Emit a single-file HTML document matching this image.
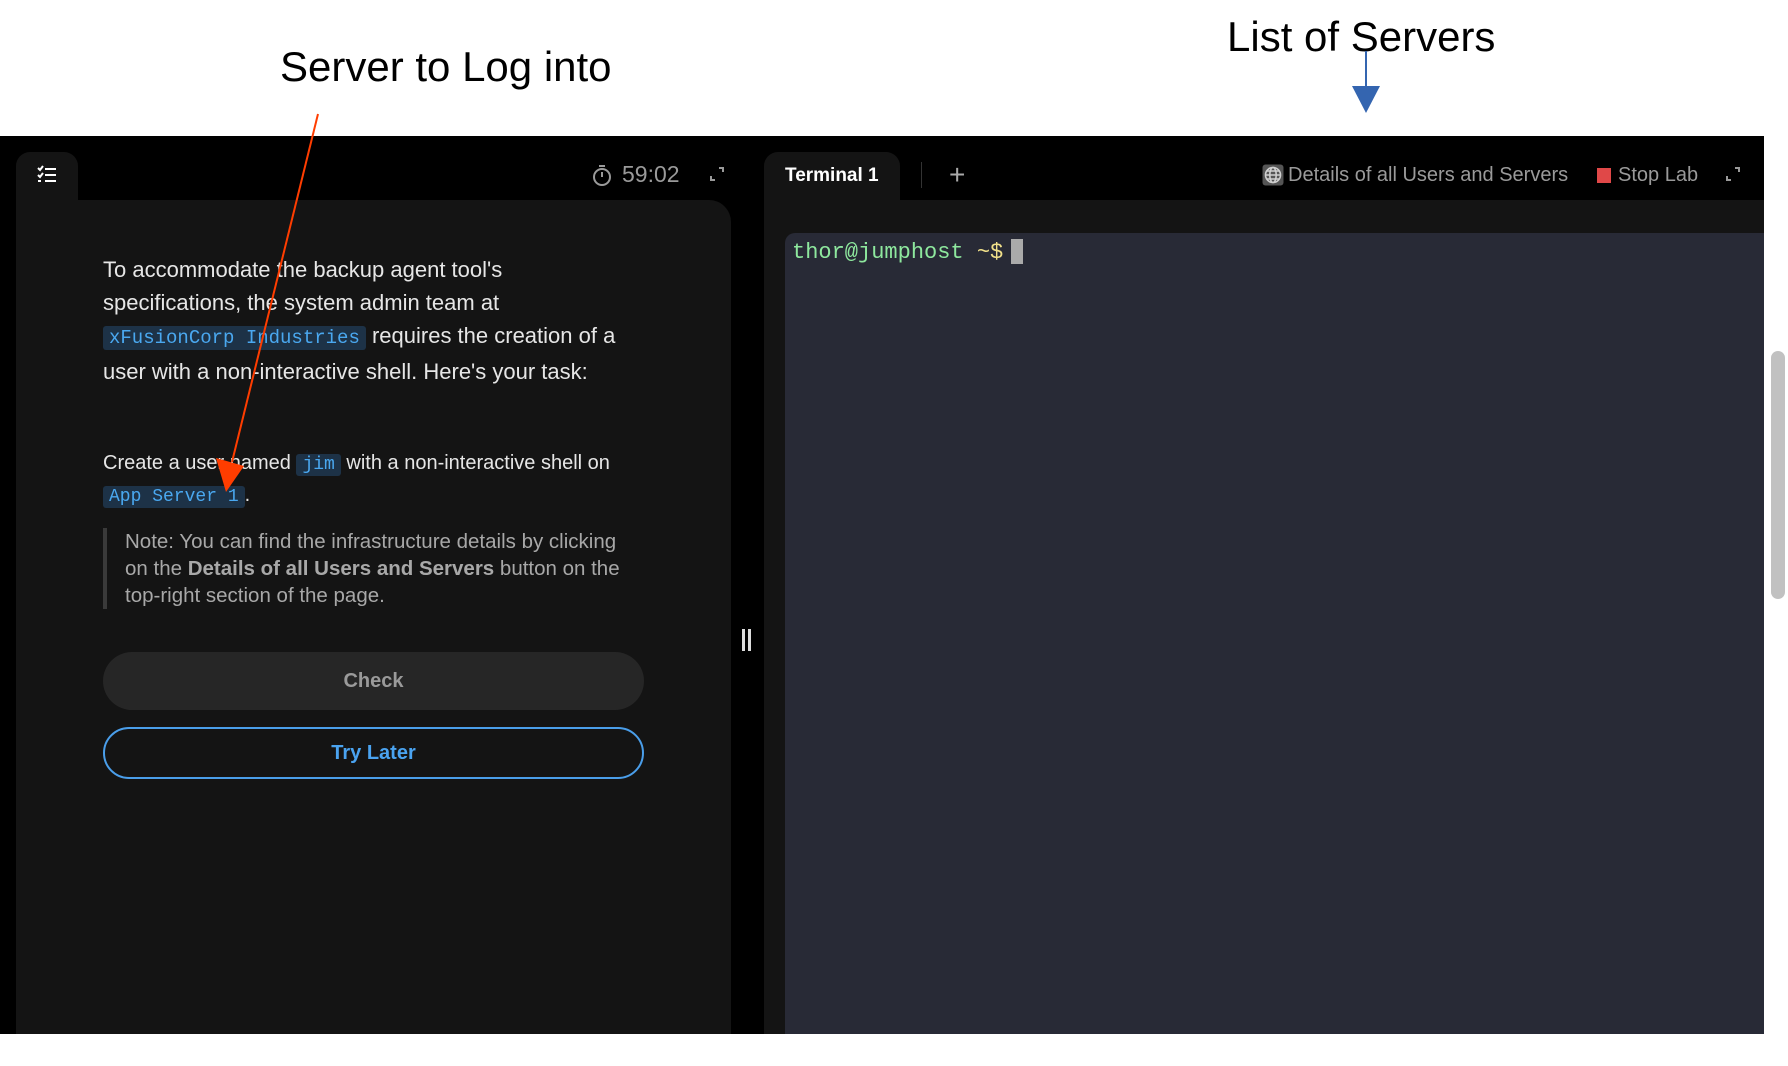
<!DOCTYPE html>
<html><head><meta charset="utf-8"><style>
*{margin:0;padding:0;box-sizing:border-box}
body{width:1788px;height:1066px;background:#fff;position:relative;overflow:hidden;font-family:"Liberation Sans",sans-serif}
.a{position:absolute}
.dark{left:0;top:136px;width:1764px;height:898px;background:#000}
.lp{left:16px;top:200px;width:715px;height:834px;background:#141414;border-top-right-radius:22px}
.ltab{left:16px;top:152px;width:62px;height:60px;background:#141414;border-radius:14px 14px 0 0}
.rtab{left:764px;top:152px;width:136px;height:60px;background:#141414;border-radius:14px 14px 0 0;color:#fff;font-weight:bold;font-size:19px;padding-left:21px;line-height:48px}
.rp{left:764px;top:200px;width:1000px;height:834px;background:#141414}
.term{left:785px;top:233px;width:979px;height:801px;background:#282a36;border-top-left-radius:10px}
.txt{color:#e6e6e6;font-size:22px;line-height:33px;white-space:nowrap}
code{font-family:"Liberation Mono",monospace;color:#4aa8f0;background:#1d3247;padding:1px 6px;border-radius:3px;font-size:19px}
.hdr{color:#9a9a9a;font-size:20px}
</style></head><body>
<div class="a" style="left:280px;top:43px;font-size:42px;color:#000">Server to Log into</div>
<div class="a" style="left:1227px;top:13px;font-size:42px;color:#000">List of Servers</div>
<div class="a dark"></div>
<div class="a ltab"></div>
<div class="a lp"></div>
<svg class="a" style="left:36px;top:164px" width="22" height="22" viewBox="0 0 22 22" fill="none" stroke="#fff" stroke-width="2"><path d="M2 4l2 2 3-4M2 11l2 2 3-4M9 5h11M9 11h11M9 17h11M2 17h3"/></svg>
<svg class="a" style="left:591px;top:163px" width="22" height="24" viewBox="0 0 22 24" fill="none" stroke="#9a9a9a" stroke-width="2"><circle cx="11" cy="14" r="8"/><path d="M8 3h6M11 14V9"/></svg>
<div class="a hdr" style="left:622px;top:161px;font-size:23px">59:02</div>
<svg class="a" style="left:709px;top:166px" width="16" height="16" viewBox="0 0 16 16" fill="none" stroke="#9a9a9a" stroke-width="2"><path d="M10 2h4v4M2 10v4h4"/></svg>
<div class="a txt" style="left:103px;top:253px">To accommodate the backup agent tool's<br>specifications, the system admin team at<br><code>xFusionCorp Industries</code> requires the creation of a<br>user with a non-interactive shell. Here's your task:</div>
<div class="a txt" style="left:103px;top:448px;font-size:20px;line-height:30px">Create a user named <code style="font-size:18px">jim</code> with a non-interactive shell on<br><code style="font-size:18px">App Server 1</code>.</div>
<div class="a" style="left:103px;top:528px;width:4px;height:81px;background:#3a3a3a"></div>
<div class="a" style="left:125px;top:528px;color:#a8a8a8;font-size:20.5px;line-height:27px;white-space:nowrap">Note: You can find the infrastructure details by clicking<br>on the <b>Details of all Users and Servers</b> button on the<br>top-right section of the page.</div>
<div class="a" style="left:103px;top:652px;width:541px;height:58px;background:#262626;border-radius:29px;color:#9a9a9a;font-weight:bold;font-size:20px;text-align:center;line-height:58px">Check</div>
<div class="a" style="left:103px;top:727px;width:541px;height:52px;border:2px solid #4a9eea;border-radius:26px;color:#4aa3f0;font-weight:bold;font-size:20px;text-align:center;line-height:48px">Try Later</div>
<div class="a" style="left:742px;top:629px;width:3px;height:22px;background:#ddd"></div>
<div class="a" style="left:748px;top:629px;width:3px;height:22px;background:#ddd"></div>
<div class="a rp"></div>
<div class="a rtab">Terminal 1</div>
<div class="a" style="left:921px;top:162px;width:1px;height:26px;background:#333"></div>
<div class="a" style="left:949px;top:160px;color:#aaa;font-size:28px;line-height:30px">+</div>
<svg class="a" style="left:1262px;top:164px" width="22" height="22" viewBox="0 0 22 22" fill="none" stroke="#cfcfcf" stroke-width="1.6"><rect x="0.5" y="0.5" width="21" height="21" rx="3" fill="#555" stroke="none"/><circle cx="11" cy="11" r="7.5"/><ellipse cx="11" cy="11" rx="3.2" ry="7.5"/><path d="M3.5 11h15M5 7h12M5 15h12"/></svg>
<div class="a hdr" style="left:1288px;top:164px">Details of all Users and Servers</div>
<div class="a" style="left:1597px;top:168px;width:14px;height:15px;background:#e04848"></div>
<div class="a hdr" style="left:1618px;top:164px">Stop Lab</div>
<svg class="a" style="left:1725px;top:166px" width="16" height="16" viewBox="0 0 16 16" fill="none" stroke="#9a9a9a" stroke-width="2"><path d="M10 2h4v4M2 10v4h4"/></svg>
<div class="a term"></div>
<div class="a" style="left:792px;top:240px;font-family:'Liberation Mono',monospace;font-size:22px;color:#8ee89e">thor@jumphost <span style="color:#f1e08a">~$</span></div>
<div class="a" style="left:1011px;top:239px;width:12px;height:25px;background:#aaa"></div>
<div class="a" style="left:1764px;top:0;width:24px;height:1066px;background:#fff"></div>
<div class="a" style="left:1771px;top:351px;width:14px;height:248px;background:#c1c1c1;border-radius:7px"></div>
<svg class="a" style="left:0;top:0" width="1788" height="1066">
<line x1="318" y1="114" x2="232" y2="462" stroke="#ff3d00" stroke-width="2"/>
<polygon points="216,458 244,466 226,492" fill="#ff3d00"/>
<line x1="1366" y1="51" x2="1366" y2="86" stroke="#3465b0" stroke-width="2"/>
<polygon points="1352,86 1380,86 1366,113" fill="#3465b0"/>
</svg>
</body></html>
